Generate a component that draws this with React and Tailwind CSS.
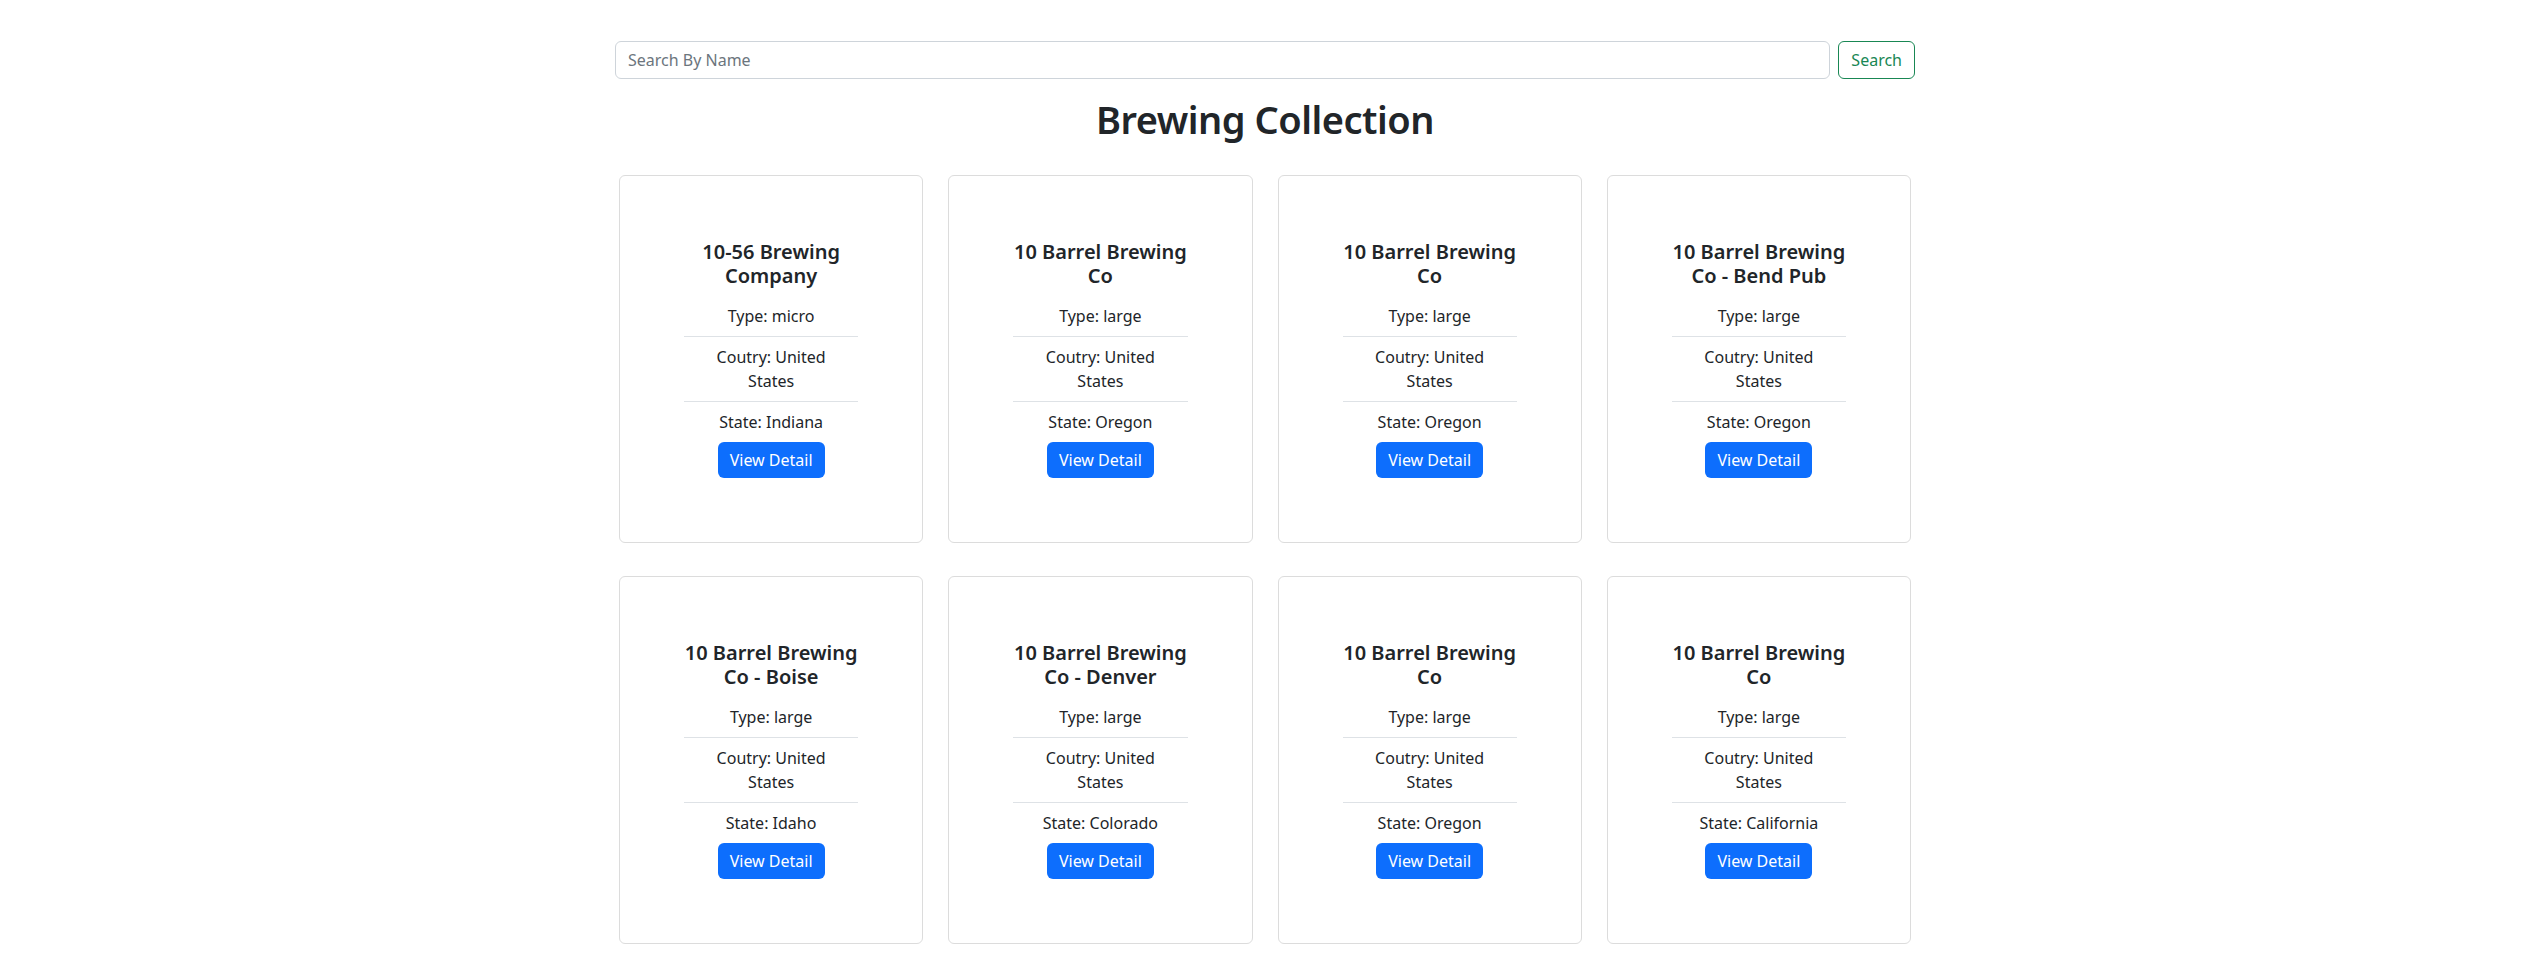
import React, { useState } from 'react';

const brewerias = [
    { id: 1, nome: '10-56 Brewing Company', tipo: 'micro', pais: 'United States', estado: 'Indiana' },
    { id: 2, nome: '10 Barrel Brewing Co', tipo: 'large', pais: 'United States', estado: 'Oregon' },
    { id: 3, nome: '10 Barrel Brewing Co', tipo: 'large', pais: 'United States', estado: 'Oregon' },
    { id: 4, nome: '10 Barrel Brewing Co - Bend Pub', tipo: 'large', pais: 'United States', estado: 'Oregon' },
    { id: 5, nome: '10 Barrel Brewing Co - Boise', tipo: 'large', pais: 'United States', estado: 'Idaho' },
    { id: 6, nome: '10 Barrel Brewing Co - Denver', tipo: 'large', pais: 'United States', estado: 'Colorado' },
    { id: 7, nome: '10 Barrel Brewing Co', tipo: 'large', pais: 'United States', estado: 'Oregon' },
    { id: 8, nome: '10 Barrel Brewing Co', tipo: 'large', pais: 'United States', estado: 'California' },
];

function BreweryCard({ b }) {
    return (
        <div className="bg-white border border-[#dcdcdc] rounded-md px-16 py-16 flex flex-col items-center text-center">
            <h5 className="w-full text-[20px] leading-[24px] font-semibold text-[#212529] mb-2">{b.nome}</h5>
            <ul className="w-full text-base leading-6 text-[#212529]">
                <li className="px-4 py-2 border-b border-[#dee2e6]">Type: {b.tipo}</li>
                <li className="px-4 py-2 border-b border-[#dee2e6]">Coutry: {b.pais}</li>
                <li className="px-4 py-2">State: {b.estado}</li>
            </ul>
            <button className="bg-[#0d6efd] text-white text-base leading-6 px-3 py-1.5 rounded-md">
                View Detail
            </button>
        </div>
    );
}

export default function App() {
    const [busca, setBusca] = useState('');

    return (
        <div className="min-h-screen bg-white font-['Noto_Sans',sans-serif] text-[#212529]">
            <div className="w-[1300px] mx-auto pt-[41px] pb-6">
                {/* barra de busca */}
                <div className="flex gap-2">
                    <input
                        value={busca}
                        onChange={(e) => setBusca(e.target.value)}
                        placeholder="Search By Name"
                        className="flex-1 h-[38px] px-3 text-base border border-[#ced4da] rounded-md placeholder:text-[#6c757d] outline-none"
                    />
                    <button className="h-[38px] px-3 text-base text-[#198754] border border-[#198754] rounded-md">
                        Search
                    </button>
                </div>

                <h1 className="mt-4 text-[38px] leading-[48px] font-semibold tracking-[-0.5px] text-center">Brewing Collection</h1>

                <div className="mt-8 px-[4px] grid grid-cols-4 gap-x-[25px] gap-y-[33px]">
                    {brewerias.map(b => (
                        <BreweryCard key={b.id} b={b} />
                    ))}
                </div>
            </div>
        </div>
    );
}
